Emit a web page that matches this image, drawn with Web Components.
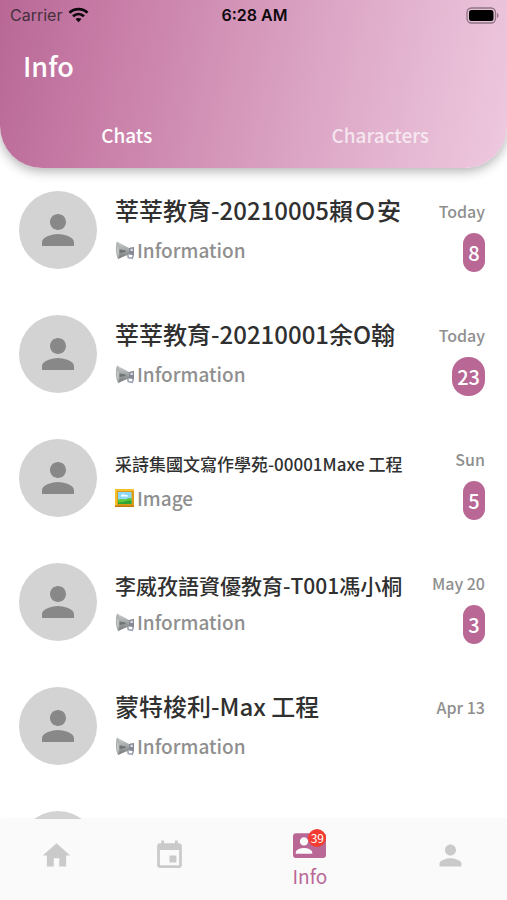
<!DOCTYPE html>
<html lang="zh-Hant">
<head>
<meta charset="utf-8">
<meta name="viewport" content="width=device-width, initial-scale=1">
<title>Info</title>
<style>
html, body { margin: 0; height: 100%; }
body { font-family: "Noto Sans CJK TC", "Noto Sans", sans-serif; font-weight: 500; background: #fff; color: #303030;
  --accent: #b96896; --muted: #8f8f8f; --idle: #cacaca; }
</style>
</head>
<body>
<chat-app>
  <app-header slot="header" heading="Info">
    <status-bar slot="status" carrier="Carrier" time="6:28 AM"></status-bar>
    <header-tab active>Chats</header-tab>
    <header-tab>Characters</header-tab>
  </app-header>
  <chat-row size="large" kind="info" date="Today" count="8">莘莘教育-20210005賴Ｏ安</chat-row>
  <chat-row size="large" kind="info" date="Today" count="23">莘莘教育-20210001余O翰</chat-row>
  <chat-row size="small" kind="image" date="Sun" count="5">采詩集國文寫作學苑-00001Maxe 工程</chat-row>
  <chat-row size="medium" kind="info" date="May 20" count="3">李威孜語資優教育-T001馮小桐</chat-row>
  <chat-row size="large" kind="info" date="Apr 13">蒙特梭利-Max 工程</chat-row>
  <chat-row></chat-row>
  <nav-bar slot="nav">
    <nav-item icon="home" label="Home"></nav-item>
    <nav-item icon="event" label="Calendar"></nav-item>
    <nav-item icon="contact" label="Info" count="39" active></nav-item>
    <nav-item icon="person" label="Profile"></nav-item>
  </nav-bar>
</chat-app>

<script>
const PERSON = 'M12 12c2.21 0 4-1.79 4-4s-1.79-4-4-4-4 1.79-4 4 1.79 4 4 4zm0 2c-2.67 0-8 1.34-8 4v2h16v-2c0-2.66-5.33-4-8-4z';
const ICONS = {
  person: PERSON,
  home: 'M10 20v-6h4v6h5v-8h3L12 3 2 12h3v8z',
  event: 'M17 12h-5v5h5v-5zM16 1v2H8V1H6v2H5c-1.11 0-1.99.9-1.99 2L3 19c0 1.100.89 2 2 2h14c1.100 0 2-.9 2-2V5c0-1.100-.9-2-2-2h-1V1h-2zm3 18H5V8h14v11z',
  contact: 'M22 3H2C.9 3 0 3.900 0 5v14c0 1.100.9 2 2 2h20c1.100 0 2-.9 2-2V5c0-1.100-.9-2-2-2zM8 6c1.660 0 3 1.340 3 3s-1.340 3-3 3-3-1.340-3-3 1.340-3 3-3zm6 12H2v-1c0-2 4-3.100 6-3.100s6 1.100 6 3.100v1z'
};
const MEGAPHONE = `<svg viewBox="0 0 20 20" aria-hidden="true">
  <defs>
    <linearGradient id="horn" x1="0" y1="0" x2="0" y2="1"><stop offset="0" stop-color="#cdd0d0"/><stop offset=".5" stop-color="#a2a6a6"/><stop offset="1" stop-color="#74787b"/></linearGradient>
  </defs>
  <path d="M12.500 13l.8 4.500 4 .8 1.200-3.500" fill="none" stroke="#a1a7b8" stroke-width="1.700"/>
  <path d="M2 1.500L14 8l5-1v8l-5-.8L3 19z" fill="url(#horn)"/>
  <path d="M2 1.500c2.700 3 3.700 13 1 17.500C.6 15 .3 6 2 1.500z" fill="#a9adad"/>
  <path d="M2.800 5c1.200 3 1.300 7.500.2 11C1.600 13 1.600 8 2.800 5z" fill="#c6c9c8"/>
  <path d="M4.500 9.500l6 .9v1.500l-6 1z" fill="#6e7375"/>
  <path d="M14 8l5-1v8l-5-.8z" fill="#858996"/>
  <path d="M15.500 8.800h2.300v2.200h-2.300z" fill="#dfe1e8"/>
</svg>`;
const FRAME = `<svg viewBox="0 0 20 20" aria-hidden="true">
  <path d="M0 1h19v18H0z" fill="#dc9b18"/><path d="M0 1h19v2H0zM0 1h2v18H0z" fill="#f5c02c"/>
  <path d="M0 17.500h19V19H0z" fill="#bd7d11"/>
  <path d="M3 4h13.500v12H3z" fill="#8cd8fa"/>
  <path d="M6 8c0-2 3-2.500 4-.8 2-.6 3 .3 3 1.300H6z" fill="#fff"/>
  <path d="M3 11.500c4-1.500 6.500 .3 8.500-.5 2-.9 3.500-1.300 5-1v6H3z" fill="#5dc83c"/>
  <path d="M3 14.500c4.500 .5 8.500-2.500 13.500-2v3.500H3z" fill="#2fa536"/>
</svg>`;

function define(name, render) {
  customElements.define(name, class extends HTMLElement {
    constructor() { super(); this.attachShadow({ mode: 'open' }); }
    connectedCallback() { this.shadowRoot.innerHTML = render(this); }
  });
}

define('chat-app', () => `
<style>
:host { display: flex; flex-direction: column; height: 100vh; overflow: hidden; }
main { flex: 1; min-height: 0; overflow: hidden; }
</style>
<slot name="header"></slot><main><slot></slot></main><slot name="nav"></slot>`);

define('app-header', el => `
<style>
:host { display: block; position: relative; z-index: 1; color: #fff; border-radius: 0 0 42px 42px;
  background: linear-gradient(102deg, #b96896 0%, #ca81aa 26%, #dba4c4 60%, #eec9df 100%);
  box-shadow: 0 3px 12px rgba(0,0,0,.32); }
h1 { margin: 0; padding: 16px 23px; font-size: 27px; line-height: 40px; font-weight: 500; }
nav { display: flex; height: 66px; }
</style>
<slot name="status"></slot><h1>${el.getAttribute('heading')}</h1><nav><slot></slot></nav>`);

define('header-tab', el => `
<style>
:host { flex: 1; display: flex; }
button { flex: 1; border: 0; padding: 0; background: none; font: inherit; font-size: 19px; line-height: 28px;
  color: ${el.hasAttribute('active') ? '#fff' : 'rgba(255,255,255,.7)'}; }
</style>
<button type="button"><slot></slot></button>`);

define('status-bar', el => `
<style>
:host { display: grid; grid-template-columns: 1fr auto 1fr; align-items: center; height: 30px; padding: 0 8px 0 10px;
  font-family: Inter, "Liberation Sans", sans-serif; font-size: 16px; line-height: 20px; color: #0c080b; }
.carrier { display: flex; align-items: center; gap: 6px; color: #46303d; font-weight: 400; }
.time { font-weight: 600; }
.battery { justify-self: end; display: block; }
</style>
<span class="carrier">${el.getAttribute('carrier')}
<svg width="21" height="16" viewBox="0 0 21 16" fill="none" stroke="#0c080b" stroke-width="2.800" aria-hidden="true">
<path d="M1.500 5.800C6.500.9 14.500.9 19.500 5.800"/><path d="M5 9.300c3.300-3 7.700-3 11 0"/><path d="M7.500 12l3 3.300 3-3.300c-1.700-1.500-4.300-1.500-6 0z" fill="#0c080b" stroke="none"/></svg></span>
<span class="time">${el.getAttribute('time')}</span>
<svg class="battery" width="33" height="17" viewBox="0 0 33 17" aria-hidden="true">
<rect x="1" y="1" width="28.500" height="15" rx="4.500" fill="none" stroke="#8d7584" stroke-width="1.300"/>
<rect x="3" y="3" width="24.500" height="11" rx="2.500" fill="#000"/><path d="M31 6c2 .8 2 4 0 5z" fill="#8d7584"/></svg>`);

const KINDS = { info: [MEGAPHONE, 'Information'], image: [FRAME, 'Image'] };
const SIZES = { large: [24, 36], medium: [21, 30], small: [17, 24] };
define('chat-row', el => {
  const [icon, text] = KINDS[el.getAttribute('kind')] || ['', ''];
  const [size, line] = SIZES[el.getAttribute('size')] || SIZES.large;
  const count = el.getAttribute('count');
  return `
<style>
:host { display: grid; grid-template-columns: 78px minmax(0, 1fr) auto; column-gap: 18px; align-items: center;
  box-sizing: border-box; height: 124px; padding: 0 22px 0 19px; }
.avatar { display: grid; place-items: center; width: 78px; height: 78px; border-radius: 50%; background: #d3d3d3; color: #888; }
.avatar svg { width: 48px; height: 48px; }
.body { display: grid; grid-template-rows: 36px 28px; row-gap: 8px; align-items: end; padding-bottom: 4px; }
h2 { margin: 0; font-weight: 500; font-size: ${size}px; line-height: ${line}px; white-space: nowrap; }
p { margin: 0; display: flex; align-items: center; gap: 2px; font-size: 19px; line-height: 28px; color: var(--muted); }
p svg { width: 20px; height: 20px; }
.meta { align-self: start; display: flex; flex-direction: column; align-items: flex-end; gap: 10px; padding-top: 31px; }
time { font-size: 16px; line-height: 24px; color: var(--muted); }
.count { box-sizing: border-box; min-width: 22px; height: 39px; padding: 0 5px; border-radius: 16px; background: var(--accent);
  color: #fff; font-size: 20px; line-height: 39px; text-align: center; }
</style>
<div class="avatar"><svg viewBox="0 0 24 24" fill="currentColor" aria-hidden="true"><path d="${PERSON}"/></svg></div>
<div class="body"><h2><slot></slot></h2><p>${icon}<span>${text}</span></p></div>
<div class="meta"><time>${el.getAttribute('date') || ''}</time>${count ? `<span class="count">${count}</span>` : ''}</div>`;
});

define('nav-bar', () => `
<style>
:host { display: block; background: #fafafa; position: relative; z-index: 1; box-shadow: 0 0 2px rgba(0,0,0,.05); }
nav { display: flex; height: 81px; }
</style>
<nav><slot></slot></nav>`);

define('nav-item', el => {
  const active = el.hasAttribute('active');
  const count = el.getAttribute('count');
  return `
<style>
:host { flex: ${active ? 3 : 2}; display: flex; }
button { flex: 1; display: flex; flex-direction: column; align-items: center; justify-content: center; border: 0; padding: 0 0 ${active ? 0 : 8}px;
  background: none; font: inherit; font-weight: 400; font-size: 19px; line-height: 28px; color: ${active ? 'var(--accent)' : 'var(--idle)'}; }
.icon { position: relative; display: block; }
.icon svg { display: block; width: 33px; height: 33px; }
.count { position: absolute; top: 0; right: 0; min-width: 18px; height: 18px; border-radius: 50%; background: #f43b30; color: #fff;
  font-size: 12px; line-height: 18px; text-align: center; }
</style>
<button type="button" aria-label="${el.getAttribute('label')}"><span class="icon"><svg viewBox="0 0 24 24" fill="currentColor" aria-hidden="true"><path d="${ICONS[el.getAttribute('icon')]}"/></svg>${count ? `<span class="count">${count}</span>` : ''}</span>${active ? `<span>${el.getAttribute('label')}</span>` : ''}</button>`;
});
</script>
</body>
</html>
